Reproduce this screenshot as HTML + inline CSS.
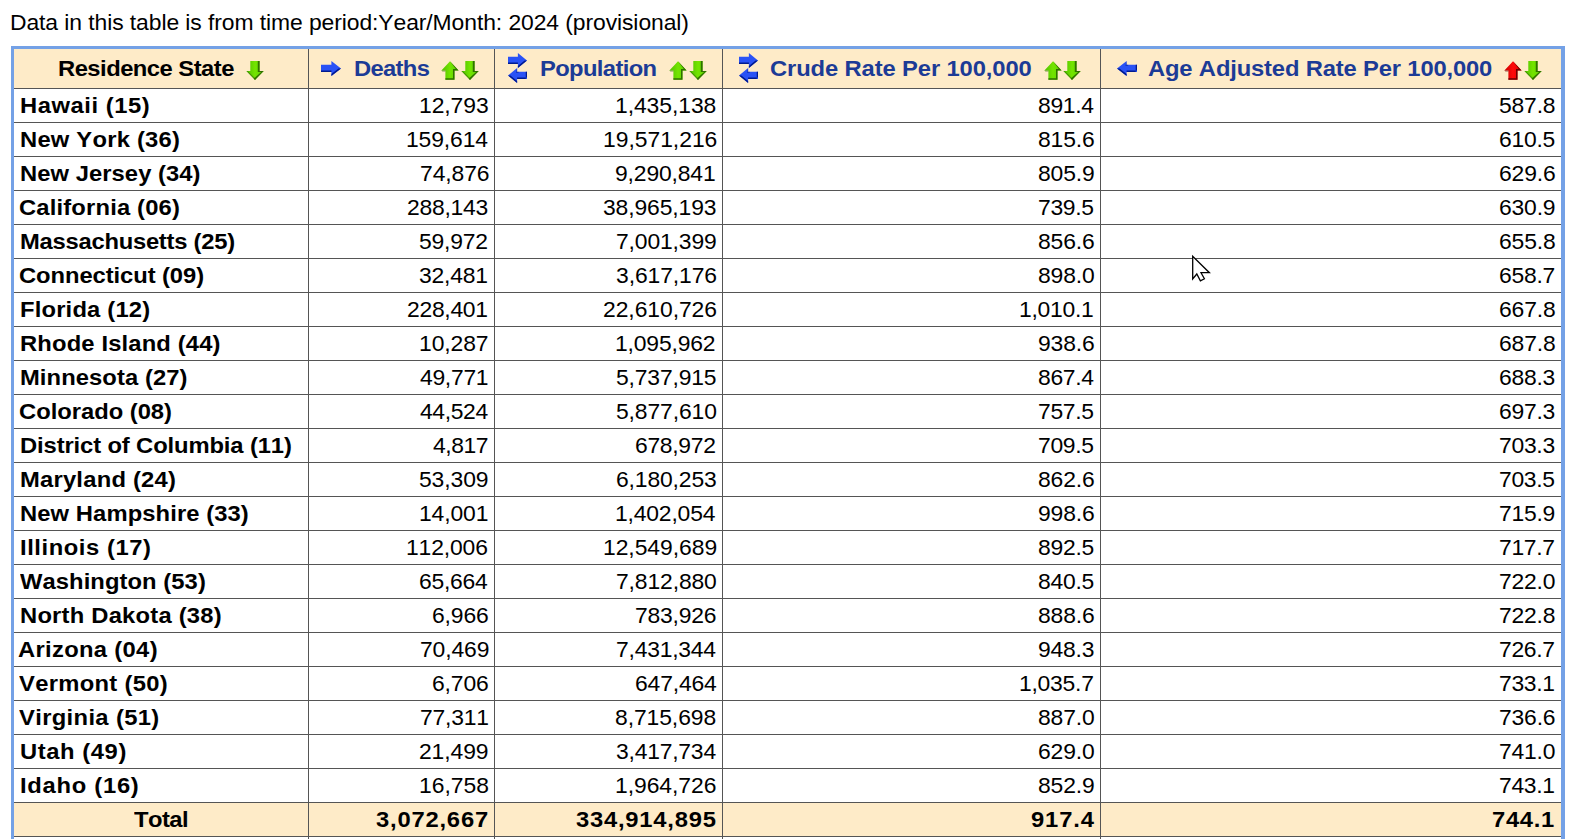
<!DOCTYPE html>
<html><head><meta charset="utf-8"><style>
html,body{margin:0;padding:0;background:#fff;width:1572px;height:839px;overflow:hidden;position:relative}
div{position:absolute}
.t{font-family:"Liberation Sans",sans-serif;font-size:22px;line-height:24px;white-space:nowrap;color:#000;transform-origin:0 0;font-kerning:none}
.b{font-weight:bold}
.ln{background:#555555}
svg{position:absolute;overflow:visible}
</style></head><body>
<svg width="0" height="0" style="position:absolute">
<defs>
<linearGradient id="gg" x1="0" y1="0" x2="1" y2="0"><stop offset="0" stop-color="#4fc000"/><stop offset="0.5" stop-color="#74e400"/><stop offset="1" stop-color="#5ad000"/></linearGradient>
<linearGradient id="rg" x1="0" y1="0" x2="1" y2="0"><stop offset="0" stop-color="#c80000"/><stop offset="0.5" stop-color="#ff0a0a"/><stop offset="1" stop-color="#e00000"/></linearGradient>
<symbol id="up" viewBox="0 0 18 19"><path d="M9 0.2L17.6 9.5H13.5V18.7H4.4V9.5H0.4Z" fill="url(#gg)"/><path d="M9 0.2L17.6 9.5H13.5V18.7H4.4V17.2H12V8H14.8Z" fill="#2a6400" opacity="0.9"/><path d="M0.4 9.5H4.4V10.5H1.4Z" fill="#2a6400" opacity="0.6"/></symbol>
<symbol id="upr" viewBox="0 0 18 19"><path d="M9 0.2L17.6 9.5H13.5V18.7H4.4V9.5H0.4Z" fill="url(#rg)"/><path d="M9 0.2L17.6 9.5H13.5V18.7H4.4V17.2H12V8H14.8Z" fill="#5a0000" opacity="0.9"/><path d="M0.4 9.5H4.4V10.5H1.4Z" fill="#5a0000" opacity="0.6"/></symbol>
<symbol id="dn" viewBox="0 0 18 19"><path d="M4.3 0H13.6V9.9H17.7L9 19L0.4 9.9H4.3Z" fill="url(#gg)"/><path d="M11.8 0H13.6V9.9H17.7L9 19L7.8 17.6L15.2 10.9H11.8Z" fill="#2a6400" opacity="0.9"/><path d="M0.4 9.9L9 19L9.6 17.8L2 10.2Z" fill="#2a6400" opacity="0.55"/></symbol>
<symbol id="ra" viewBox="0 0 20 15"><path d="M0 3.7H10.4V0L20 7.4L10.4 15V11H0Z" fill="#2a52f5"/><path d="M0 9.5H10.4V11H0ZM10.4 15L20 7.4L17.5 7.4L10.4 13Z" fill="#001a90"/></symbol>
<symbol id="la" viewBox="0 0 20 15"><path d="M20 3.7H9.6V0L0 7.4L9.6 15V11H20Z" fill="#2a52f5"/><path d="M20 9.5H9.6V11H20ZM18.7 3.7H20V11H18.7ZM9.6 15L0 7.4L2.5 7.4L9.6 13Z" fill="#001a90"/><path d="M9.6 0V3.7H11.2V5H8.4Z" fill="#001a90" opacity="0.5"/></symbol>
</defs></svg>

<div style="left:14px;top:49px;width:1547px;height:39px;background:#feebc8"></div>
<div style="left:14px;top:803px;width:1547px;height:33px;background:#feebc8"></div>
<div class="ln" style="left:14px;top:88px;width:1547px;height:1px"></div>
<div class="ln" style="left:14px;top:122px;width:1547px;height:1px"></div>
<div class="ln" style="left:14px;top:156px;width:1547px;height:1px"></div>
<div class="ln" style="left:14px;top:190px;width:1547px;height:1px"></div>
<div class="ln" style="left:14px;top:224px;width:1547px;height:1px"></div>
<div class="ln" style="left:14px;top:258px;width:1547px;height:1px"></div>
<div class="ln" style="left:14px;top:292px;width:1547px;height:1px"></div>
<div class="ln" style="left:14px;top:326px;width:1547px;height:1px"></div>
<div class="ln" style="left:14px;top:360px;width:1547px;height:1px"></div>
<div class="ln" style="left:14px;top:394px;width:1547px;height:1px"></div>
<div class="ln" style="left:14px;top:428px;width:1547px;height:1px"></div>
<div class="ln" style="left:14px;top:462px;width:1547px;height:1px"></div>
<div class="ln" style="left:14px;top:496px;width:1547px;height:1px"></div>
<div class="ln" style="left:14px;top:530px;width:1547px;height:1px"></div>
<div class="ln" style="left:14px;top:564px;width:1547px;height:1px"></div>
<div class="ln" style="left:14px;top:598px;width:1547px;height:1px"></div>
<div class="ln" style="left:14px;top:632px;width:1547px;height:1px"></div>
<div class="ln" style="left:14px;top:666px;width:1547px;height:1px"></div>
<div class="ln" style="left:14px;top:700px;width:1547px;height:1px"></div>
<div class="ln" style="left:14px;top:734px;width:1547px;height:1px"></div>
<div class="ln" style="left:14px;top:768px;width:1547px;height:1px"></div>
<div class="ln" style="left:14px;top:802px;width:1547px;height:1px"></div>
<div class="ln" style="left:14px;top:836px;width:1547px;height:1px"></div>
<div class="ln" style="left:308px;top:49px;width:1px;height:790px"></div>
<div class="ln" style="left:494px;top:49px;width:1px;height:790px"></div>
<div class="ln" style="left:722px;top:49px;width:1px;height:790px"></div>
<div class="ln" style="left:1100px;top:49px;width:1px;height:790px"></div>
<div style="left:11px;top:46px;width:1554px;height:3px;background:#74a1e6"></div>
<div style="left:11px;top:46px;width:3px;height:800px;background:#74a1e6"></div>
<div style="left:1561px;top:46px;width:4px;height:800px;background:#74a1e6"></div>
<svg style="left:246px;top:61px" width="18" height="19"><use href="#dn"/></svg>
<svg style="left:321px;top:61px" width="20" height="15"><use href="#ra"/></svg>
<svg style="left:441px;top:61px" width="18" height="19"><use href="#up"/></svg>
<svg style="left:461px;top:61px" width="18" height="19"><use href="#dn"/></svg>
<svg style="left:508px;top:53px" width="19" height="15" viewBox="0 0 20 15" preserveAspectRatio="none"><use href="#ra"/></svg><svg style="left:508px;top:68px" width="19" height="15" viewBox="0 0 20 15" preserveAspectRatio="none"><use href="#la"/></svg>
<svg style="left:669px;top:61px" width="18" height="19"><use href="#up"/></svg>
<svg style="left:689px;top:61px" width="18" height="19"><use href="#dn"/></svg>
<svg style="left:739px;top:53px" width="19" height="15" viewBox="0 0 20 15" preserveAspectRatio="none"><use href="#ra"/></svg><svg style="left:739px;top:68px" width="19" height="15" viewBox="0 0 20 15" preserveAspectRatio="none"><use href="#la"/></svg>
<svg style="left:1044px;top:61px" width="18" height="19"><use href="#up"/></svg>
<svg style="left:1063px;top:61px" width="18" height="19"><use href="#dn"/></svg>
<svg style="left:1117px;top:61px" width="20" height="15"><use href="#la"/></svg>
<svg style="left:1504px;top:61px" width="18" height="19"><use href="#upr"/></svg>
<svg style="left:1524px;top:61px" width="18" height="19"><use href="#dn"/></svg>
<div class="t" style="left:9.92px;top:11px;letter-spacing:-0.074px;transform:scaleX(1.04)">Data in this table is from time period:Year/Month: 2024 (provisional)</div>
<div class="t b" style="left:58.42px;top:57px;letter-spacing:-0.472px;transform:scaleX(1.08)">Residence State</div>
<div class="t b" style="left:353.82px;top:57px;letter-spacing:-0.622px;transform:scaleX(1.08);color:#1c3b96">Deaths</div>
<div class="t b" style="left:539.62px;top:57px;letter-spacing:-0.582px;transform:scaleX(1.08);color:#1c3b96">Population</div>
<div class="t b" style="left:770.12px;top:57px;letter-spacing:-0.108px;transform:scaleX(1.08);color:#1c3b96">Crude Rate Per 100,000</div>
<div class="t b" style="left:1148.42px;top:57px;letter-spacing:-0.142px;transform:scaleX(1.08);color:#1c3b96">Age Adjusted Rate Per 100,000</div>
<div class="t b" style="left:19.90px;top:94px;letter-spacing:0.507px;transform:scaleX(1.08)">Hawaii (15)</div>
<div class="t" style="left:419.14px;top:94px;letter-spacing:-0.069px;transform:scaleX(1.04)">12,793</div>
<div class="t" style="left:615.33px;top:94px;letter-spacing:-0.060px;transform:scaleX(1.04)">1,435,138</div>
<div class="t" style="left:1038.00px;top:94px;letter-spacing:-0.327px;transform:scaleX(1.04)">891.4</div>
<div class="t" style="left:1499.20px;top:94px;letter-spacing:-0.173px;transform:scaleX(1.04)">587.8</div>
<div class="t b" style="left:19.90px;top:128px;letter-spacing:0.208px;transform:scaleX(1.08)">New York (36)</div>
<div class="t" style="left:406.41px;top:128px;letter-spacing:-0.109px;transform:scaleX(1.04)">159,614</div>
<div class="t" style="left:602.60px;top:128px;letter-spacing:-0.019px;transform:scaleX(1.04)">19,571,216</div>
<div class="t" style="left:1038.00px;top:128px;letter-spacing:-0.101px;transform:scaleX(1.04)">815.6</div>
<div class="t" style="left:1499.10px;top:128px;letter-spacing:-0.245px;transform:scaleX(1.04)">610.5</div>
<div class="t b" style="left:19.90px;top:162px;letter-spacing:0.059px;transform:scaleX(1.08)">New Jersey (34)</div>
<div class="t" style="left:419.58px;top:162px;letter-spacing:-0.077px;transform:scaleX(1.04)">74,876</div>
<div class="t" style="left:615.47px;top:162px;letter-spacing:-0.137px;transform:scaleX(1.04)">9,290,841</div>
<div class="t" style="left:1038.00px;top:162px;letter-spacing:-0.149px;transform:scaleX(1.04)">805.9</div>
<div class="t" style="left:1499.10px;top:162px;letter-spacing:-0.125px;transform:scaleX(1.04)">629.6</div>
<div class="t b" style="left:19.11px;top:196px;letter-spacing:0.159px;transform:scaleX(1.08)">California (06)</div>
<div class="t" style="left:406.75px;top:196px;letter-spacing:-0.244px;transform:scaleX(1.04)">288,143</div>
<div class="t" style="left:602.94px;top:196px;letter-spacing:-0.098px;transform:scaleX(1.04)">38,965,193</div>
<div class="t" style="left:1038.30px;top:196px;letter-spacing:-0.293px;transform:scaleX(1.04)">739.5</div>
<div class="t" style="left:1499.10px;top:196px;letter-spacing:-0.173px;transform:scaleX(1.04)">630.9</div>
<div class="t b" style="left:19.90px;top:230px;letter-spacing:-0.227px;transform:scaleX(1.08)">Massachusetts (25)</div>
<div class="t" style="left:419.48px;top:230px;letter-spacing:-0.212px;transform:scaleX(1.04)">59,972</div>
<div class="t" style="left:615.77px;top:230px;letter-spacing:-0.125px;transform:scaleX(1.04)">7,001,399</div>
<div class="t" style="left:1038.00px;top:230px;letter-spacing:-0.101px;transform:scaleX(1.04)">856.6</div>
<div class="t" style="left:1499.10px;top:230px;letter-spacing:-0.149px;transform:scaleX(1.04)">655.8</div>
<div class="t b" style="left:19.11px;top:264px;letter-spacing:-0.067px;transform:scaleX(1.08)">Connecticut (09)</div>
<div class="t" style="left:419.48px;top:264px;letter-spacing:-0.173px;transform:scaleX(1.04)">32,481</div>
<div class="t" style="left:615.67px;top:264px;letter-spacing:-0.089px;transform:scaleX(1.04)">3,617,176</div>
<div class="t" style="left:1038.00px;top:264px;letter-spacing:-0.125px;transform:scaleX(1.04)">898.0</div>
<div class="t" style="left:1499.10px;top:264px;letter-spacing:-0.245px;transform:scaleX(1.04)">658.7</div>
<div class="t b" style="left:19.90px;top:298px;letter-spacing:0.173px;transform:scaleX(1.08)">Florida (12)</div>
<div class="t" style="left:406.75px;top:298px;letter-spacing:-0.276px;transform:scaleX(1.04)">228,401</div>
<div class="t" style="left:602.94px;top:298px;letter-spacing:-0.056px;transform:scaleX(1.04)">22,610,726</div>
<div class="t" style="left:1018.78px;top:298px;letter-spacing:-0.247px;transform:scaleX(1.04)">1,010.1</div>
<div class="t" style="left:1499.10px;top:298px;letter-spacing:-0.149px;transform:scaleX(1.04)">667.8</div>
<div class="t b" style="left:19.90px;top:332px;letter-spacing:0.141px;transform:scaleX(1.08)">Rhode Island (44)</div>
<div class="t" style="left:419.14px;top:332px;letter-spacing:-0.088px;transform:scaleX(1.04)">10,287</div>
<div class="t" style="left:615.33px;top:332px;letter-spacing:-0.144px;transform:scaleX(1.04)">1,095,962</div>
<div class="t" style="left:1038.00px;top:332px;letter-spacing:-0.101px;transform:scaleX(1.04)">938.6</div>
<div class="t" style="left:1499.10px;top:332px;letter-spacing:-0.149px;transform:scaleX(1.04)">687.8</div>
<div class="t b" style="left:19.90px;top:366px;letter-spacing:0.075px;transform:scaleX(1.08)">Minnesota (27)</div>
<div class="t" style="left:420.02px;top:366px;letter-spacing:-0.277px;transform:scaleX(1.04)">49,771</div>
<div class="t" style="left:615.67px;top:366px;letter-spacing:-0.149px;transform:scaleX(1.04)">5,737,915</div>
<div class="t" style="left:1038.00px;top:366px;letter-spacing:-0.327px;transform:scaleX(1.04)">867.4</div>
<div class="t" style="left:1499.10px;top:366px;letter-spacing:-0.221px;transform:scaleX(1.04)">688.3</div>
<div class="t b" style="left:19.11px;top:400px;letter-spacing:-0.015px;transform:scaleX(1.08)">Colorado (08)</div>
<div class="t" style="left:420.02px;top:400px;letter-spacing:-0.342px;transform:scaleX(1.04)">44,524</div>
<div class="t" style="left:615.67px;top:400px;letter-spacing:-0.101px;transform:scaleX(1.04)">5,877,610</div>
<div class="t" style="left:1038.30px;top:400px;letter-spacing:-0.293px;transform:scaleX(1.04)">757.5</div>
<div class="t" style="left:1499.10px;top:400px;letter-spacing:-0.221px;transform:scaleX(1.04)">697.3</div>
<div class="t b" style="left:19.90px;top:434px;letter-spacing:-0.106px;transform:scaleX(1.08)">District of Columbia (11)</div>
<div class="t" style="left:432.74px;top:434px;letter-spacing:-0.399px;transform:scaleX(1.04)">4,817</div>
<div class="t" style="left:634.65px;top:434px;letter-spacing:-0.292px;transform:scaleX(1.04)">678,972</div>
<div class="t" style="left:1038.30px;top:434px;letter-spacing:-0.293px;transform:scaleX(1.04)">709.5</div>
<div class="t" style="left:1499.30px;top:434px;letter-spacing:-0.269px;transform:scaleX(1.04)">703.3</div>
<div class="t b" style="left:19.90px;top:468px;letter-spacing:0.210px;transform:scaleX(1.08)">Maryland (24)</div>
<div class="t" style="left:419.48px;top:468px;letter-spacing:-0.096px;transform:scaleX(1.04)">53,309</div>
<div class="t" style="left:615.57px;top:468px;letter-spacing:-0.125px;transform:scaleX(1.04)">6,180,253</div>
<div class="t" style="left:1038.00px;top:468px;letter-spacing:-0.101px;transform:scaleX(1.04)">862.6</div>
<div class="t" style="left:1499.30px;top:468px;letter-spacing:-0.293px;transform:scaleX(1.04)">703.5</div>
<div class="t b" style="left:19.90px;top:502px;letter-spacing:0.091px;transform:scaleX(1.08)">New Hampshire (33)</div>
<div class="t" style="left:419.14px;top:502px;letter-spacing:-0.108px;transform:scaleX(1.04)">14,001</div>
<div class="t" style="left:615.33px;top:502px;letter-spacing:-0.161px;transform:scaleX(1.04)">1,402,054</div>
<div class="t" style="left:1038.00px;top:502px;letter-spacing:-0.101px;transform:scaleX(1.04)">998.6</div>
<div class="t" style="left:1499.30px;top:502px;letter-spacing:-0.221px;transform:scaleX(1.04)">715.9</div>
<div class="t b" style="left:19.90px;top:536px;letter-spacing:0.531px;transform:scaleX(1.08)">Illinois (17)</div>
<div class="t" style="left:406.41px;top:536px;letter-spacing:-0.125px;transform:scaleX(1.04)">112,006</div>
<div class="t" style="left:602.60px;top:536px;letter-spacing:-0.041px;transform:scaleX(1.04)">12,549,689</div>
<div class="t" style="left:1038.00px;top:536px;letter-spacing:-0.221px;transform:scaleX(1.04)">892.5</div>
<div class="t" style="left:1499.30px;top:536px;letter-spacing:-0.293px;transform:scaleX(1.04)">717.7</div>
<div class="t b" style="left:19.79px;top:570px;letter-spacing:0.067px;transform:scaleX(1.08)">Washington (53)</div>
<div class="t" style="left:419.38px;top:570px;letter-spacing:-0.219px;transform:scaleX(1.04)">65,664</div>
<div class="t" style="left:615.77px;top:570px;letter-spacing:-0.113px;transform:scaleX(1.04)">7,812,880</div>
<div class="t" style="left:1038.00px;top:570px;letter-spacing:-0.221px;transform:scaleX(1.04)">840.5</div>
<div class="t" style="left:1499.30px;top:570px;letter-spacing:-0.197px;transform:scaleX(1.04)">722.0</div>
<div class="t b" style="left:19.90px;top:604px;letter-spacing:0.205px;transform:scaleX(1.08)">North Dakota (38)</div>
<div class="t" style="left:432.10px;top:604px;letter-spacing:-0.125px;transform:scaleX(1.04)">6,966</div>
<div class="t" style="left:634.85px;top:604px;letter-spacing:-0.196px;transform:scaleX(1.04)">783,926</div>
<div class="t" style="left:1038.00px;top:604px;letter-spacing:-0.101px;transform:scaleX(1.04)">888.6</div>
<div class="t" style="left:1499.30px;top:604px;letter-spacing:-0.197px;transform:scaleX(1.04)">722.8</div>
<div class="t b" style="left:18.22px;top:638px;letter-spacing:0.301px;transform:scaleX(1.08)">Arizona (04)</div>
<div class="t" style="left:419.58px;top:638px;letter-spacing:-0.115px;transform:scaleX(1.04)">70,469</div>
<div class="t" style="left:615.77px;top:638px;letter-spacing:-0.214px;transform:scaleX(1.04)">7,431,344</div>
<div class="t" style="left:1038.00px;top:638px;letter-spacing:-0.197px;transform:scaleX(1.04)">948.3</div>
<div class="t" style="left:1499.30px;top:638px;letter-spacing:-0.293px;transform:scaleX(1.04)">726.7</div>
<div class="t b" style="left:19.30px;top:672px;letter-spacing:0.293px;transform:scaleX(1.08)">Vermont (50)</div>
<div class="t" style="left:432.10px;top:672px;letter-spacing:-0.125px;transform:scaleX(1.04)">6,706</div>
<div class="t" style="left:634.65px;top:672px;letter-spacing:-0.147px;transform:scaleX(1.04)">647,464</div>
<div class="t" style="left:1018.78px;top:672px;letter-spacing:-0.231px;transform:scaleX(1.04)">1,035.7</div>
<div class="t" style="left:1499.30px;top:672px;letter-spacing:-0.317px;transform:scaleX(1.04)">733.1</div>
<div class="t b" style="left:19.30px;top:706px;letter-spacing:0.324px;transform:scaleX(1.08)">Virginia (51)</div>
<div class="t" style="left:419.58px;top:706px;letter-spacing:-0.192px;transform:scaleX(1.04)">77,311</div>
<div class="t" style="left:615.47px;top:706px;letter-spacing:-0.077px;transform:scaleX(1.04)">8,715,698</div>
<div class="t" style="left:1038.00px;top:706px;letter-spacing:-0.125px;transform:scaleX(1.04)">887.0</div>
<div class="t" style="left:1499.30px;top:706px;letter-spacing:-0.173px;transform:scaleX(1.04)">736.6</div>
<div class="t b" style="left:19.90px;top:740px;letter-spacing:0.539px;transform:scaleX(1.08)">Utah (49)</div>
<div class="t" style="left:419.48px;top:740px;letter-spacing:-0.096px;transform:scaleX(1.04)">21,499</div>
<div class="t" style="left:615.67px;top:740px;letter-spacing:-0.202px;transform:scaleX(1.04)">3,417,734</div>
<div class="t" style="left:1038.10px;top:740px;letter-spacing:-0.149px;transform:scaleX(1.04)">629.0</div>
<div class="t" style="left:1499.30px;top:740px;letter-spacing:-0.197px;transform:scaleX(1.04)">741.0</div>
<div class="t b" style="left:19.90px;top:774px;letter-spacing:0.675px;transform:scaleX(1.08)">Idaho (16)</div>
<div class="t" style="left:419.14px;top:774px;letter-spacing:-0.012px;transform:scaleX(1.04)">16,758</div>
<div class="t" style="left:615.33px;top:774px;letter-spacing:-0.048px;transform:scaleX(1.04)">1,964,726</div>
<div class="t" style="left:1038.00px;top:774px;letter-spacing:-0.149px;transform:scaleX(1.04)">852.9</div>
<div class="t" style="left:1499.30px;top:774px;letter-spacing:-0.317px;transform:scaleX(1.04)">743.1</div>
<div class="t b" style="left:134.40px;top:808px;letter-spacing:-0.505px;transform:scaleX(1.08)">Total</div>
<div class="t b" style="left:376.23px;top:808px;letter-spacing:0.743px;transform:scaleX(1.08)">3,072,667</div>
<div class="t b" style="left:576.07px;top:808px;letter-spacing:0.717px;transform:scaleX(1.08)">334,914,895</div>
<div class="t b" style="left:1031.08px;top:808px;letter-spacing:0.826px;transform:scaleX(1.08)">917.4</div>
<div class="t b" style="left:1492.38px;top:808px;letter-spacing:0.642px;transform:scaleX(1.08)">744.1</div>
<svg style="left:1192px;top:255px" width="20" height="28" viewBox="0 0 20 28"><path d="M0.7 1.2V24L4.8 19L8.4 25.8L12.4 23.8L9 17.7H17.4Z" fill="#fff" stroke="#000" stroke-width="1.3" stroke-linejoin="miter"/></svg>
</body></html>
